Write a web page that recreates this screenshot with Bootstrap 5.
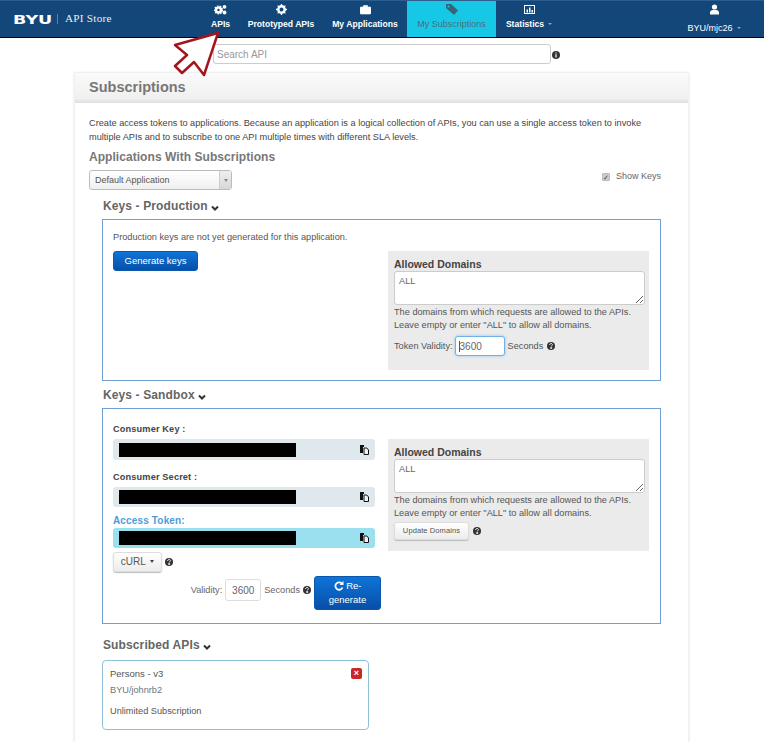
<!DOCTYPE html>
<html lang="en">
<head>
<meta charset="utf-8">
<title>API Store - Subscriptions</title>
<link rel="stylesheet" href="https://cdn.jsdelivr.net/npm/bootstrap@5.3.0/dist/css/bootstrap.min.css">
<style>
html,body{background:#fff;height:742px;overflow:hidden}
body{font-family:"Liberation Sans",Arial,sans-serif;font-size:9.2px;line-height:13px;color:#444;position:relative}
.topbar{height:38px;background:#13477a;border-top:1px solid #2d5d8c;border-bottom:1px solid #000;padding:0;align-items:stretch;flex-wrap:nowrap}
.brandbox{width:201px;padding-left:13px;color:#fff;font-family:"Liberation Serif",serif}
.brandbox b{font-family:"DejaVu Sans",sans-serif;font-weight:700;font-size:12.5px;transform:scaleX(1.4);transform-origin:left;width:37px;display:inline-block}
.brandsep{width:1px;height:10px;background:#5d82a8;margin:0 7px 0 7px}
.brandtxt{font-size:11.2px;letter-spacing:.25px;color:#e6edf4;margin-top:-2px}
.menu{flex-direction:row;flex-wrap:nowrap;flex:1}
.menu .nav-item{display:flex}
.menu .nav-link{color:#fff;font-size:8.6px;font-weight:700;text-align:center;padding:3px 0 0;line-height:12px;display:flex;flex-direction:column;align-items:center;white-space:nowrap}
.menu svg{display:block;height:11px;margin-bottom:3px}
.menu .mi1{margin-left:9px;width:21px}
.menu .mi2{margin-left:17px;width:66px}
.menu .mi3{margin-left:18px;width:66px}
.menu .mi4{margin-left:9px;width:89px;background:#17c8e6;color:#4b6d80;font-weight:400;font-size:9px}
.menu .mi5{margin-left:10px;width:46px}
.menu .mi6{margin-left:auto;margin-right:23px;width:54px;font-weight:400;font-size:9px}
.caretlet{display:inline-block;margin-left:4px;border-top:2px solid #8ba7c4;border-left:2px solid transparent;border-right:2px solid transparent;vertical-align:2px}
.searchrow{padding:6px 0 0 213px;height:34px;align-items:flex-start}
.searchbox{width:338px;height:20px;font-size:10px;padding:0 3px;border:1px solid #ccc;border-radius:3px;color:#888}
.searchbox::placeholder{color:#999}
.infodot{margin:7px 0 0 1px}
.hint{flex:none}
.sheet{margin:0 75px 0 74px;border:1px solid #f0f0f0;border-bottom:0;border-radius:3px 3px 0 0;height:700px;background:#fff;box-shadow:-1px 0 2px #f2f2f2,1px 0 2px #f2f2f2}
.sheethead{height:30px;background:linear-gradient(#fafafa,#f0f0f0 85%,#dedede);padding:6px 14px;font-size:14.5px;line-height:17px;font-weight:700;color:#777;margin:0}
.sheetbody{padding:13px 27px 0 14px}
.intro{margin:0;line-height:14px;color:#444;width:570px}
.subhead{font-size:12px;line-height:14px;font-weight:700;color:#777;margin:6px 0 6px;letter-spacing:.05px}
.pickrow{height:29px}
.picker{width:143px;height:20px;border:1px solid #bbb;border-radius:3px;font-size:9px;color:#555;background:linear-gradient(#fff,#f0f0f0);padding-left:5px}
.pickarrow{width:12px;height:100%;border-left:1px solid #ccc;background:linear-gradient(#eee,#d8d8d8);display:flex;align-items:center;justify-content:center}
.pickarrow i{border-top:3px solid #888;border-left:2px solid transparent;border-right:2px solid transparent}
.showkeys{align-self:flex-start;margin:0;font-size:9px;color:#666}
.tick{width:8px;height:8px;background:#ccc;border:1px solid #bbb;border-radius:1px;margin-right:6px;color:#444;font-size:7px;line-height:7px;text-align:center}
.keyshead{margin:0 0 6px 14px;font-size:12px;line-height:14px;font-weight:700;color:#666;letter-spacing:.12px}
.keyshead svg{margin-left:0;vertical-align:-2px}
.subshead{margin-bottom:8px}
.keysbox{margin-left:13px;border:1px solid #6f9fd3;padding:8px 11px 10px 10px;gap:13px;margin-bottom:7px;align-items:flex-start}
.prodbox{height:162px}
.sandbox{height:216px;padding-top:14px;margin-bottom:14px}
.keycol{width:262px;flex:none}
.domainwell{width:261px;flex:none;background:#ebebeb;padding:7px 4px 0 6px;color:#444}
.prodwell{height:119px;margin-top:23px}
.sandwell{height:112px;margin-top:16px}
.domainwell b{display:block;font-size:10.5px;line-height:13px;color:#444}
.domarea{width:251px;height:34px;margin-top:0;padding:3px 4px;border:1px solid #ccc;border-radius:3px;font-size:9.2px;line-height:12px;color:#666;min-height:0;display:block;background:#fff}
.domnote{margin:0;padding-top:1px;line-height:13px;color:#555;white-space:nowrap}
.keycol .prodnote{padding-top:3px}
.tokrow{margin-top:4px;gap:2px;color:#555}
.tokrow svg{margin-left:2px}
.tokinput{width:50px;height:20px;margin-right:1px;padding:0 3px 0 4px;font-size:10px;border:1px solid #6fb1e6;border-radius:3px;box-shadow:0 0 3px #8cc4ee;color:#666;background:#fff linear-gradient(#555,#555) no-repeat 3px 4px/1px 11px}
.genbtn{background:linear-gradient(#0f74d8,#0650a8);border:1px solid #0a57ad;color:#fff;font-size:9.5px;line-height:12px;border-radius:3px;padding:0}
.genkeys{width:85px;height:20px;margin-top:7px}
.keytitle{line-height:12px;font-weight:700;color:#444;margin:0 0 4px;letter-spacing:.15px}
.keybar{height:21px;background:#dfe8ec;border-radius:3px;padding:0 6px;justify-content:space-between;align-items:center;margin-bottom:11px}
.keybar i{display:block;width:177px;height:14px;background:#000}
.secretbar{height:20px;margin-bottom:8px}
.tokentitle{color:#4e9cd6;font-size:10px;margin:-1px 0 1px;line-height:13px}
.tokenbar{background:#9be0ee;margin-bottom:2px;height:20px}
.softbtn{background:linear-gradient(#fff,#ececec);border:1px solid #ddd;box-shadow:0 1px 1px #bbb;color:#555;border-radius:3px;padding:0}
.curlbtn{width:49px;height:20px;font-size:10px;line-height:18px}
.curlbtn i{display:inline-block;border-top:3px solid #444;border-left:2px solid transparent;border-right:2px solid transparent;vertical-align:2px;margin-left:2px}
.curlrow{gap:3px;height:24px}
.validrow{gap:3px;justify-content:flex-end;align-items:flex-start;margin:2px -6px 0 0;color:#666}
.validgroup{gap:3px;height:22px;margin-top:3px}
.validgroup .validin{width:36px;height:22px;padding:0 4px;font-size:10px;border:1px solid #ddd;border-radius:3px;color:#666;text-align:center}
.regen{width:67px;height:34px;line-height:14px;font-size:9.5px}
.updbtn{width:75px;height:18px;font-size:7.5px;line-height:16px;letter-spacing:.1px}
.updrow{gap:4px;margin-top:2px}
.subcard{width:267px;margin-left:13px;height:70px;border:1px solid #8fc0da;border-radius:4px;padding:6px 7px 0;color:#555;position:relative}
.subcard p{margin:0}
.subname{font-size:9.5px}
.xbtn{position:absolute;right:6px;top:7px;width:11px;height:11px;background:#c9252c;border-radius:2px;color:#fff;font:700 9px/10px "Liberation Sans",sans-serif;text-align:center}
.pointer{position:absolute;left:170px;top:28px;pointer-events:none}
</style>
</head>
<body>
<nav class="navbar topbar">
  <div class="brandbox d-flex align-items-center"><b>BYU</b><span class="brandsep"></span><span class="brandtxt">API Store</span></div>
  <ul class="nav menu">
    <li class="nav-item"><a class="nav-link mi1" href="#"><svg width="13" height="11" viewBox="0 0 13 11"><circle cx="4.500" cy="6" r="2.500" fill="none" stroke="#fff" stroke-width="2.600"/><circle cx="4.500" cy="6" r="4" fill="none" stroke="#fff" stroke-width="1.200" stroke-dasharray="1.500 1.300"/><circle cx="10.500" cy="2.800" r="1.900" fill="#fff"/><circle cx="10.500" cy="8.500" r="1.900" fill="#fff"/></svg>APIs</a></li>
    <li class="nav-item"><a class="nav-link mi2" href="#"><svg width="11" height="11" viewBox="0 0 11 11"><circle cx="5.500" cy="5.500" r="3.200" fill="none" stroke="#fff" stroke-width="2.400"/><path d="M5.500 0v2M5.500 9v2M0 5.500h2M9 5.500h2M1.600 1.600l1.400 1.400M8 8l1.400 1.400M1.600 9.400L3 8M8 3l1.400-1.400" stroke="#fff" stroke-width="1.300"/></svg>Prototyped APIs</a></li>
    <li class="nav-item"><a class="nav-link mi3" href="#"><svg width="11" height="11" viewBox="0 0 11 11"><path d="M1 3h9a1 1 0 0 1 1 1v5a1 1 0 0 1-1 1H1a1 1 0 0 1-1-1V4a1 1 0 0 1 1-1zM3.500 3V1.500h4V3" fill="#fff" stroke="#fff" stroke-width=".6"/></svg>My Applications</a></li>
    <li class="nav-item"><a class="nav-link mi4" href="#"><svg width="12" height="11" viewBox="0 0 12 11"><path d="M0 0h5l7 6.500-4 4.500L0 4z" fill="#3c6275"/><circle cx="2.500" cy="2.500" r="1" fill="#17c8e6"/></svg>My Subscriptions</a></li>
    <li class="nav-item"><a class="nav-link mi5" href="#"><svg width="11" height="11" viewBox="0 0 11 11"><rect x=".5" y="1.500" width="10" height="8" fill="#13477a" stroke="#fff"/><path d="M2.500 5.500h1.500v3H2.500zM5 3.500h1.500v5H5zM7.500 6h1.500v2.500H7.500z" fill="#fff"/></svg><span>Statistics<i class="caretlet"></i></span></a></li>
    <li class="nav-item ms-auto"><a class="nav-link mi6" href="#"><svg width="9" height="11" viewBox="0 0 9 11"><circle cx="4.500" cy="3" r="2.600" fill="#fff"/><path d="M0 10.500V8a3 3 0 0 1 3-2h3a3 3 0 0 1 3 2v2.500z" fill="#fff"/></svg><span class="mt-1">BYU/mjc26<i class="caretlet"></i></span></a></li>
  </ul>
</nav>
<div class="d-flex searchrow">
  <input class="form-control searchbox" type="text" placeholder="Search API">
  <svg class="infodot hint" width="8" height="8" viewBox="0 0 8 8"><circle cx="4" cy="4" r="4" fill="#333"/><path d="M3.400 1.500h1.200v1H3.400zM3.400 3.300h1.200v3.200H3.400z" fill="#fff"/></svg>
</div>
<main class="sheet">
  <h2 class="sheethead">Subscriptions</h2>
  <div class="sheetbody">
    <p class="intro">Create access tokens to applications. Because an application is a logical collection of APIs, you can use a single access token to invoke multiple APIs and to subscribe to one API multiple times with different SLA levels.</p>
    <h3 class="subhead">Applications With Subscriptions</h3>
    <div class="d-flex justify-content-between pickrow">
      <div class="picker d-flex align-items-center justify-content-between"><span>Default Application</span><span class="pickarrow"><i></i></span></div>
      <label class="showkeys d-flex align-items-center"><span class="tick">✓</span>Show Keys</label>
    </div>

    <h4 class="keyshead">Keys - Production <svg width="8" height="7" viewBox="0 0 8 7"><path d="M1 1.500l3 3 3-3" fill="none" stroke="#333" stroke-width="2"/></svg></h4>
    <section class="keysbox prodbox d-flex">
      <div class="keycol">
        <div class="domnote prodnote">Production keys are not yet generated for this application.</div>
        <button class="btn genbtn genkeys" type="button">Generate keys</button>
      </div>
      <div class="domainwell prodwell">
        <b>Allowed Domains</b>
        <textarea class="form-control domarea" aria-label="Allowed domains">ALL</textarea>
        <p class="domnote">The domains from which requests are allowed to the APIs.<br>Leave empty or enter "ALL" to allow all domains.</p>
        <div class="d-flex align-items-center tokrow">Token Validity:
          <input class="form-control tokinput" type="text" value="3600">Seconds
          <svg class="hint" width="8" height="8" viewBox="0 0 8 8"><circle cx="4" cy="4" r="4" fill="#333"/><path d="M2.600 3c0-2 2.800-2 2.800-.3 0 1-1.200 1-1.200 1.800M3.700 5.500h1v1h-1z" fill="none" stroke="#fff" stroke-width=".9"/></svg>
        </div>
      </div>
    </section>

    <h4 class="keyshead">Keys - Sandbox <svg width="8" height="7" viewBox="0 0 8 7"><path d="M1 1.500l3 3 3-3" fill="none" stroke="#333" stroke-width="2"/></svg></h4>
    <section class="keysbox sandbox d-flex">
      <div class="keycol">
        <p class="keytitle">Consumer Key :</p>
        <div class="keybar d-flex"><i></i><svg width="9" height="10" viewBox="0 0 9 10"><path d="M0 0h4v2H3v6H0z" fill="#111"/><path d="M4 3h2.800L8.500 5v4.500H4z" fill="#eef3f5" stroke="#111"/></svg></div>
        <p class="keytitle">Consumer Secret :</p>
        <div class="keybar secretbar d-flex"><i></i><svg width="9" height="10" viewBox="0 0 9 10"><path d="M0 0h4v2H3v6H0z" fill="#111"/><path d="M4 3h2.800L8.500 5v4.500H4z" fill="#eef3f5" stroke="#111"/></svg></div>
        <p class="keytitle tokentitle">Access Token:</p>
        <div class="keybar tokenbar d-flex"><i></i><svg width="9" height="10" viewBox="0 0 9 10"><path d="M0 0h4v2H3v6H0z" fill="#111"/><path d="M4 3h2.800L8.500 5v4.500H4z" fill="#eef3f5" stroke="#111"/></svg></div>
        <div class="d-flex align-items-center curlrow">
          <button class="btn softbtn curlbtn" type="button">cURL <i></i></button>
          <svg class="hint" width="8" height="8" viewBox="0 0 8 8"><circle cx="4" cy="4" r="4" fill="#333"/><path d="M2.600 3c0-2 2.800-2 2.800-.3 0 1-1.200 1-1.200 1.800M3.700 5.500h1v1h-1z" fill="none" stroke="#fff" stroke-width=".9"/></svg>
        </div>
        <div class="d-flex validrow">
          <div class="d-flex align-items-center validgroup">Validity:
            <input class="form-control validin" type="text" value="3600">Seconds
            <svg class="hint" width="8" height="8" viewBox="0 0 8 8"><circle cx="4" cy="4" r="4" fill="#333"/><path d="M2.600 3c0-2 2.800-2 2.800-.3 0 1-1.200 1-1.200 1.800M3.700 5.500h1v1h-1z" fill="none" stroke="#fff" stroke-width=".9"/></svg>
          </div>
          <button class="btn genbtn regen" type="button"><svg width="10" height="10" viewBox="0 0 10 10"><path d="M8.500 6.500A3.700 3.700 0 1 1 7.800 2.500" fill="none" stroke="#fff" stroke-width="1.800"/><path d="M9.500 0v4h-4z" fill="#fff"/></svg> Re-<br>generate</button>
        </div>
      </div>
      <div class="domainwell sandwell">
        <b>Allowed Domains</b>
        <textarea class="form-control domarea" aria-label="Allowed domains">ALL</textarea>
        <p class="domnote">The domains from which requests are allowed to the APIs.<br>Leave empty or enter "ALL" to allow all domains.</p>
        <div class="d-flex align-items-center updrow">
          <button class="btn softbtn updbtn" type="button">Update Domains</button>
          <svg class="hint" width="8" height="8" viewBox="0 0 8 8"><circle cx="4" cy="4" r="4" fill="#333"/><path d="M2.600 3c0-2 2.800-2 2.800-.3 0 1-1.200 1-1.200 1.800M3.700 5.500h1v1h-1z" fill="none" stroke="#fff" stroke-width=".9"/></svg>
        </div>
      </div>
    </section>

    <h4 class="keyshead subshead">Subscribed APIs <svg width="8" height="7" viewBox="0 0 8 7"><path d="M1 1.500l3 3 3-3" fill="none" stroke="#333" stroke-width="2"/></svg></h4>
    <article class="subcard">
      <p class="subname">Persons - v3</p>
      <p class="mt-1 text-secondary">BYU/johnrb2</p>
      <p class="mt-2">Unlimited Subscription</p>
      <span class="xbtn">×</span>
    </article>
  </div>
</main>
<svg class="pointer" width="52" height="52" viewBox="170 28 52 52"><polygon points="218,33 175,45 187,55 175,66 182,73 194,62 204,75" fill="#fff" stroke="#a5141c" stroke-width="2.500" stroke-linejoin="round"/></svg>
<script src="https://cdn.jsdelivr.net/npm/bootstrap@5.3.0/dist/js/bootstrap.bundle.min.js"></script>
</body>
</html>
